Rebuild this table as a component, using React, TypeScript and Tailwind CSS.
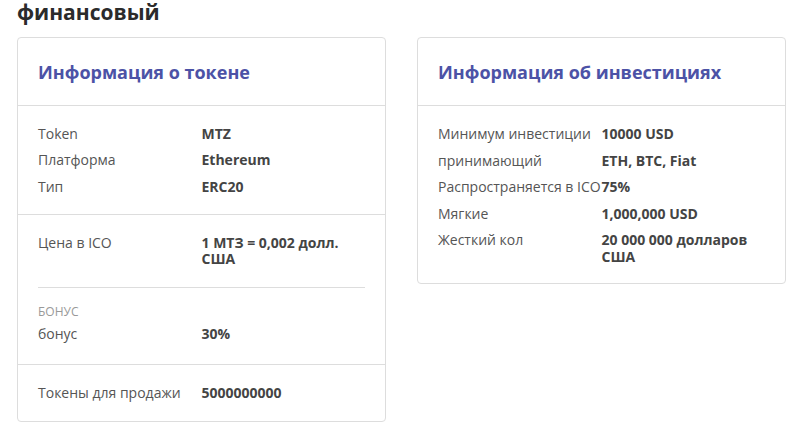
export default function App() {
  const Row = ({ label, value }: { label: string; value: string }) => (
    <div className="grid grid-cols-2 py-[5px] text-[14px] leading-[16.5px]">
      <div className="text-[#555]">{label}</div>
      <div className="font-bold text-[#444]">{value}</div>
    </div>
  );
  return (
    <div className="min-h-[431px] bg-white pl-[17px]" style={{ fontFamily: '"Open Sans", sans-serif' }}>
      <h2 className="text-[21px] font-bold leading-[25px] text-[#2b2b2b]">финансовый</h2>
      <div className="mt-[12px] flex items-start gap-[31px]">
        <div className="w-[369px] rounded-[4px] border border-[#dddddd]">
          <div className="border-b border-[#dddddd] px-[20px] py-[21.5px]">
            <h3 className="text-[18px] font-bold leading-[24px] text-[#4c52a6]">Информация о токене</h3>
          </div>
          <div className="border-b border-[#dddddd] px-[20px] pt-[14.5px] pb-[13.5px]">
            <Row label="Token" value="MTZ" />
            <Row label="Платформа" value="Ethereum" />
            <Row label="Тип" value="ERC20" />
          </div>
          <div className="border-b border-[#dddddd] px-[20px] pt-[15px] pb-[16px]">
            <Row label="Цена в ICO" value="1 МТЗ = 0,002 долл. США" />
            <div className="mt-[14px] border-t border-[#dddddd]" />
            <div className="mt-[16px] mb-[1.5px] text-[12px] leading-[16px] text-[#999] uppercase">бонус</div>
            <Row label="бонус" value="30%" />
          </div>
          <div className="px-[20px] pt-[15px] pb-[15px]">
            <Row label="Токены для продажи" value="5000000000" />
          </div>
        </div>
        <div className="w-[369px] rounded-[4px] border border-[#dddddd]">
          <div className="border-b border-[#dddddd] px-[20px] py-[21.5px]">
            <h3 className="text-[18px] font-bold leading-[24px] text-[#4c52a6]">Информация об инвестициях</h3>
          </div>
          <div className="px-[20px] pt-[15px] pb-[12.5px]">
            <Row label="Минимум инвестиции" value="10000 USD" />
            <Row label="принимающий" value="ETH, BTC, Fiat" />
            <Row label="Распространяется в ICO" value="75%" />
            <Row label="Мягкие" value="1,000,000 USD" />
            <Row label="Жесткий кол" value="20 000 000 долларов США" />
          </div>
        </div>
      </div>
    </div>
  );
}
